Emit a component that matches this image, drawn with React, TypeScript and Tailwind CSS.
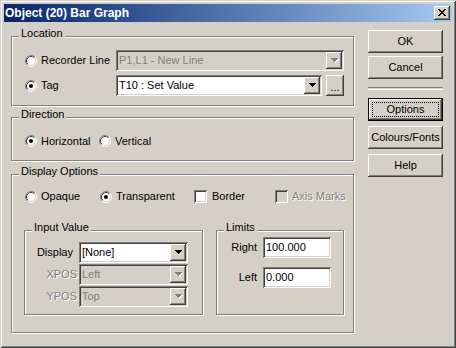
import React from "react";

const raised =
  "shadow-[inset_-1px_-1px_0_#404040,inset_1px_1px_0_#ffffff,inset_-2px_-2px_0_#808080,inset_2px_2px_0_#d4d0c8]";
const sunken =
  "shadow-[inset_1px_1px_0_#808080,inset_-1px_-1px_0_#ffffff,inset_2px_2px_0_#404040,inset_-2px_-2px_0_#d4d0c8]";
const etched = "border border-[#808080] shadow-[1px_1px_0_#ffffff,inset_1px_1px_0_#ffffff]";
const dim = "text-[#808080] [text-shadow:1px_1px_0_#ffffff]";

function Arrow({ disabled }: { disabled?: boolean }) {
  const d = "M0 0h7v1h-1v1h-1v1h-1v1h-1v-1h-1v-1h-1v-1h-1z";
  return (
    <svg width="8" height="5" viewBox="0 0 8 5" shapeRendering="crispEdges">
      {disabled && <path d={d} transform="translate(1 1)" fill="#ffffff" />}
      <path d={d} fill={disabled ? "#808080" : "#000000"} />
    </svg>
  );
}

function Combo({ value, className, disabled }: { value: string; className: string; disabled?: boolean }) {
  return (
    <div
      className={`flex h-[21px] items-center ${sunken} ${className} ${
        disabled ? "bg-[#d4d0c8] text-[#808080]" : "bg-white text-black"
      }`}
    >
      <span className="flex-1 pl-[3px] leading-[13px] whitespace-nowrap">{value}</span>
      <div className={`mr-[2px] flex h-[17px] w-[16px] items-center justify-center pl-[1px] ${raised} bg-[#d4d0c8]`}>
        <Arrow disabled={disabled} />
      </div>
    </div>
  );
}

function Radio({ checked }: { checked?: boolean }) {
  return (
    <svg width="12" height="12" viewBox="0 0 12 12" className="shrink-0">
      <circle cx="6" cy="6" r="5" fill="#ffffff" />
      <path d="M2.11 9.89 A5.5 5.5 0 0 1 9.89 2.11" fill="none" stroke="#808080" />
      <path d="M9.89 2.11 A5.5 5.5 0 0 1 2.11 9.89" fill="none" stroke="#ffffff" />
      <path d="M2.82 9.18 A4.5 4.5 0 0 1 9.18 2.82" fill="none" stroke="#404040" />
      <path d="M9.18 2.82 A4.5 4.5 0 0 1 2.82 9.18" fill="none" stroke="#d4d0c8" />
      {checked && <circle cx="6" cy="6" r="2" fill="#000000" />}
    </svg>
  );
}

function Check({ disabled }: { disabled?: boolean }) {
  return <div className={`h-[13px] w-[13px] shrink-0 ${sunken} ${disabled ? "bg-[#d4d0c8]" : "bg-white"}`} />;
}

function Group({ label, className, children }: { label: string; className: string; children?: React.ReactNode }) {
  return (
    <div className={`relative ${etched} ${className}`}>
      <span className="absolute -top-[10px] left-[7px] bg-[#d4d0c8] px-[2px] leading-[13px]">{label}</span>
      {children}
    </div>
  );
}

function Button({ label, isDefault }: { label: string; isDefault?: boolean }) {
  if (isDefault) {
    return (
      <div className="h-[23px] w-[75px] border border-black">
        <div className={`flex h-full w-full items-center justify-center p-[3px] ${raised}`}>
          <div className="flex h-full w-full items-center justify-center border border-dotted border-black leading-[13px]">
            {label}
          </div>
        </div>
      </div>
    );
  }
  return (
    <div className={`flex h-[23px] w-[75px] items-center justify-center leading-[13px] ${raised}`}>{label}</div>
  );
}

function Edit({ value }: { value: string }) {
  return (
    <div className={`flex h-[21px] w-[68px] items-center bg-white pl-[3px] leading-[13px] ${sunken}`}>{value}</div>
  );
}

export default function App() {
  return (
    <div
      className={`flex h-[348px] w-[456px] flex-col bg-[#d4d0c8] p-[4px] text-[11px] text-black shadow-[inset_1px_1px_0_#d4d0c8,inset_-1px_-1px_0_#404040,inset_2px_2px_0_#ffffff,inset_-2px_-2px_0_#808080]`}
      style={{ fontFamily: '"Liberation Sans", Arial, sans-serif' }}
    >
      {/* title bar */}
      <div className="flex h-[18px] items-center bg-linear-to-r from-[#0a246a] to-[#a6caf0] pl-[1px]">
        <span className="flex-1 text-[12px] font-bold leading-[14px] text-white">Object (20) Bar Graph</span>
        <div className={`mr-[2px] flex h-[14px] w-[16px] items-center justify-center bg-[#d4d0c8] ${raised}`}>
          <svg width="8" height="7" viewBox="0 0 8 7" shapeRendering="crispEdges" className="mb-[1px]">
            <path
              d="M0 0h2v1h-2z M6 0h2v1h-2z M1 1h2v1h-2z M5 1h2v1h-2z M2 2h4v1h-4z M3 3h2v1h-2z M2 4h4v1h-4z M1 5h2v1h-2z M5 5h2v1h-2z M0 6h2v1h-2z M6 6h2v1h-2z"
              fill="#000000"
            />
          </svg>
        </div>
      </div>

      {/* client area */}
      <div className="flex flex-1">
        <div className="ml-[7px] mt-[14px] flex w-[343px] flex-col">
          <Group label="Location" className="h-[70px] pl-[13px] pt-[13px]">
            <div className="flex h-[21px] items-center">
              <div className="flex w-[91px] items-center">
                <Radio />
                <span className="ml-[4px] leading-[13px]">Recorder Line</span>
              </div>
              <Combo value="P1,L1 - New Line" className="w-[228px]" disabled />
            </div>
            <div className="mt-[4px] flex h-[21px] items-center">
              <div className="flex w-[91px] items-center">
                <Radio checked />
                <span className="ml-[4px] leading-[13px]">Tag</span>
              </div>
              <Combo value="T10 : Set Value" className="w-[206px]" />
              <div className={`ml-[4px] flex h-[21px] w-[18px] items-end justify-center pb-[5px] leading-[8px] ${raised}`}>
                ...
              </div>
            </div>
          </Group>

          <Group label="Direction" className="mt-[11px] h-[44px] pl-[13px] pt-[17px]">
            <div className="flex h-[12px] items-center">
              <div className="flex w-[74px] items-center">
                <Radio checked />
                <span className="ml-[4px] leading-[13px]">Horizontal</span>
              </div>
              <Radio />
              <span className="ml-[4px] leading-[13px]">Vertical</span>
            </div>
          </Group>

          <Group label="Display Options" className="mt-[13px] h-[159px] pt-[15px]">
            <div className="ml-[13px] flex h-[13px] items-center">
              <div className="flex w-[75px] items-center">
                <Radio />
                <span className="ml-[4px] leading-[13px]">Opaque</span>
              </div>
              <div className="flex w-[94px] items-center">
                <Radio checked />
                <span className="ml-[4px] leading-[13px]">Transparent</span>
              </div>
              <div className="flex w-[81px] items-center">
                <Check />
                <span className="ml-[5px] leading-[13px]">Border</span>
              </div>
              <div className="flex items-center">
                <Check disabled />
                <span className={`ml-[4px] leading-[13px] ${dim}`}>Axis Marks</span>
              </div>
            </div>

            <div className="ml-[12px] mt-[27px] flex">
              <Group label="Input Value" className="h-[85px] w-[179px] pt-[11px]">
                <div className="flex h-[21px] items-center">
                  <span className="w-[54px] pr-[6px] text-right leading-[13px]">Display</span>
                  <Combo value="[None]" className="w-[109px]" />
                </div>
                <div className="mt-[1px] flex h-[21px] items-center">
                  <span className={`w-[54px] pr-[2px] text-right leading-[13px] ${dim}`}>XPOS</span>
                  <Combo value="Left" className="w-[109px]" disabled />
                </div>
                <div className="mt-[1px] flex h-[21px] items-center">
                  <span className={`w-[54px] pr-[2px] text-right leading-[13px] ${dim}`}>YPOS</span>
                  <Combo value="Top" className="w-[109px]" disabled />
                </div>
              </Group>

              <Group label="Limits" className="ml-[13px] h-[85px] w-[128px] pt-[6px]">
                <div className="flex h-[21px] items-center">
                  <span className="w-[46px] pr-[6px] text-right leading-[13px]">Right</span>
                  <Edit value="100.000" />
                </div>
                <div className="mt-[9px] flex h-[21px] items-center">
                  <span className="w-[46px] pr-[6px] text-right leading-[13px]">Left</span>
                  <Edit value="0.000" />
                </div>
              </Group>
            </div>
          </Group>
        </div>

        <div className="ml-[14px] mt-[8px] flex w-[75px] flex-col">
          <Button label="OK" />
          <div className="mt-[3px]">
            <Button label="Cancel" />
          </div>
          <div className="mt-[8px] h-[2px] w-[75px] border-t border-[#808080] shadow-[0_1px_0_#ffffff]" />
          <div className="mt-[9px]">
            <Button label="Options" isDefault />
          </div>
          <div className="mt-[5px]">
            <Button label="Colours/Fonts" />
          </div>
          <div className="mt-[5px]">
            <Button label="Help" />
          </div>
        </div>
      </div>
    </div>
  );
}
